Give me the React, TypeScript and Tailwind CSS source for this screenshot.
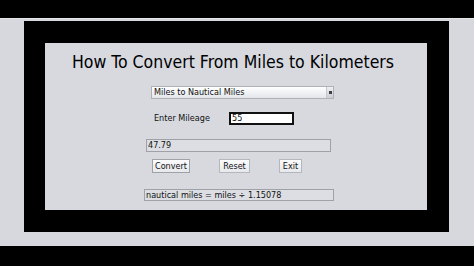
import React from "react";

const small = { fontFamily: '"DejaVu Sans Condensed", "DejaVu Sans", sans-serif' };

export default function App() {
  return (
    <div className="w-[474px] h-[266px] flex flex-col bg-black overflow-hidden" style={small}>
      <div className="h-[18px] bg-black shrink-0" />
      <div className="h-[228px] shrink-0 bg-[#d6d8de] pt-[2px] pl-[24px] pr-[25px] border-t border-[#e4e6ea]">
        <div className="h-[211px] bg-black pt-[22px] pl-[21px] pr-[22px]">
          <div className="h-[167px] bg-[#d7d9df] flex flex-col text-[#111]">
            <div className="pl-[27px] pt-[8px] h-[40px] text-[17.5px] leading-[22px] text-black whitespace-nowrap">
              How To Convert From Miles to Kilometers
            </div>
            <div className="ml-[106px] mt-[3px] w-[183px] h-[13px] flex border border-[#aeb1b8] bg-gradient-to-b from-[#ffffff] to-[#e3e5ea]">
              <div className="flex-1 text-[9px] leading-[11px] pl-[2px] whitespace-nowrap">Miles to Nautical Miles</div>
              <div className="w-[7px] border-l border-[#c4c7cd] bg-gradient-to-b from-[#eef0f3] to-[#c9ccd2] flex items-center justify-center">
                <div className="w-[3px] h-[3px] bg-[#3a3d44]" />
              </div>
            </div>
            <div className="mt-[13px] flex items-center h-[13px]">
              <div className="ml-[109px] w-[75px] text-[9px] leading-[13px] whitespace-nowrap">Enter Mileage</div>
              <div className="w-[65px] h-[13px] border-2 border-[#111] bg-white text-[9px] leading-[9px] pl-[1px]">55</div>
            </div>
            <div className="mt-[14px] ml-[101px] w-[185px] h-[13px] border border-[#9ea1a8] bg-[#dcdee3] text-[9px] leading-[11px] pl-[1px]">
              47.79
            </div>
            <div className="mt-[7px] flex h-[14px]">
              <div className="ml-[107px] w-[38px] h-[14px] border border-[#9ea1a8] bg-gradient-to-b from-[#fbfbfc] to-[#e6e8ec] text-[9px] leading-[12px] text-center">Convert</div>
              <div className="ml-[29px] w-[31px] h-[14px] border border-[#b4b7bd] bg-gradient-to-b from-[#fbfbfc] to-[#e6e8ec] text-[9px] leading-[12px] text-center">Reset</div>
              <div className="ml-[29px] w-[23px] h-[14px] border border-[#b4b7bd] bg-gradient-to-b from-[#fbfbfc] to-[#e6e8ec] text-[9px] leading-[12px] text-center">Exit</div>
            </div>
            <div className="mt-[16px] ml-[99px] w-[190px] h-[12px] border border-[#9ea1a8] bg-[#dcdee3] text-[9px] leading-[10px] pl-[1px] whitespace-nowrap">
              nautical miles = miles ÷ 1.15078
            </div>
          </div>
        </div>
      </div>
      <div className="flex-1 bg-black" />
    </div>
  );
}
